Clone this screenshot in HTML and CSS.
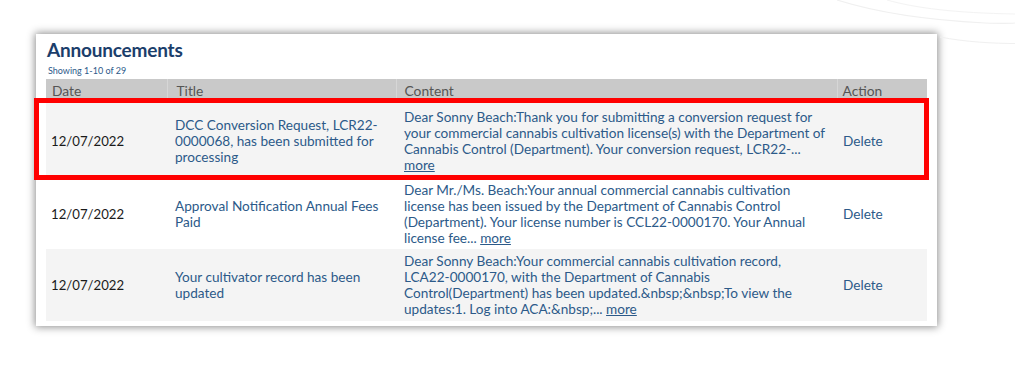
FILE: index.html
```html
<!DOCTYPE html>
<html lang="en">
<head>
    <meta charset="UTF-8">
    <title>Announcements</title>
    <link rel="stylesheet" href="styles.css">
</head>
<body>
    <!-- faint background swoosh, top right -->
    <svg class="swoosh" width="200" height="50" viewBox="0 0 200 50">
        <path d="M22 0 C60 12 110 20 170 23 C185 23.5 195 23.5 200 23" fill="none" stroke="#f0f0f0" stroke-width="1.2"/>
        <path d="M72 0 C100 8 140 13 200 14" fill="none" stroke="#f3f3f3" stroke-width="1"/>
        <path d="M125 37 C150 42 180 43.5 200 43.5" fill="none" stroke="#f0f0f0" stroke-width="1"/>
    </svg>
    <div class="panel">
        <h1>Announcements</h1>
        <p class="count">Showing 1-10 of 29</p>
        <div class="table-wrap">
            <table class="grid">
                <thead>
                    <tr>
                        <th class="col-date">Date</th>
                        <th class="col-title">Title</th>
                        <th class="col-content">Content</th>
                        <th class="col-action">Action</th>
                    </tr>
                </thead>
                <tbody>
                    <tr class="alt first">
                        <td class="date">12/07/2022</td>
                        <td class="title">DCC Conversion Request, LCR22-0000068, has been submitted for processing</td>
                        <td class="content">Dear Sonny Beach:Thank you for submitting a conversion request for your commercial cannabis cultivation license(s) with the Department of Cannabis Control (Department). Your conversion request, LCR22-... <a href="#">more</a></td>
                        <td class="action"><a href="#">Delete</a></td>
                    </tr>
                    <tr class="second">
                        <td class="date">12/07/2022</td>
                        <td class="title">Approval Notification Annual Fees Paid</td>
                        <td class="content">Dear Mr./Ms. Beach:Your annual commercial cannabis cultivation license has been issued by the Department of Cannabis Control (Department). Your license number is CCL22-0000170. Your Annual license fee... <a href="#">more</a></td>
                        <td class="action"><a href="#">Delete</a></td>
                    </tr>
                    <tr class="alt">
                        <td class="date">12/07/2022</td>
                        <td class="title">Your cultivator record has been updated</td>
                        <td class="content">Dear Sonny Beach:Your commercial cannabis cultivation record, LCA22-0000170, with the Department of Cannabis Control(Department) has been updated.&amp;nbsp;&amp;nbsp;To view the updates:1. Log into ACA:&amp;nbsp;... <a href="#">more</a></td>
                        <td class="action"><a href="#">Delete</a></td>
                    </tr>
                </tbody>
            </table>
            <!-- highlight box drawn over the first row -->
            <div class="highlight"></div>
        </div>
    </div>
</body>
</html>
```

FILE: styles.css
```css
/* Reset */
* {
    margin: 0;
    padding: 0;
    box-sizing: border-box;
}
body {
    width: 1015px;
    height: 381px;
    background: #fff;
    font-family: Lato, "Open Sans", Arial, sans-serif;
    overflow: hidden;
    position: relative;
}
.swoosh {
    position: absolute;
    top: 0;
    right: 0;
}
/* White card with the drop shadow */
.panel {
    margin: 34px 0 0 36px;
    width: 901px;
    height: 292px;
    background: #fff;
    box-shadow: 0 0 8px 1px rgba(0, 0, 0, 0.45);
    padding: 6px 10px 0 10px;
}
h1 {
    font-size: 19px;
    font-weight: 700;
    color: #1b3e6b;
    line-height: 20px;
    margin-left: 1px;
    letter-spacing: -0.2px;
}
.count {
    font-size: 9px;
    color: #2d5a8a;
    line-height: 12px;
    margin: 5px 0 2px 2px;
}
.table-wrap {
    position: relative;
}
/* Results table */
.grid {
    width: 881px;
    border-collapse: collapse;
    font-size: 13.6px;
    line-height: 16px;
    table-layout: fixed;
}
.grid th {
    background: #c9c9c9;
    color: #555;
    font-weight: 400;
    font-size: 13.8px;
    text-align: left;
    height: 20px;
    padding: 3px 6px 0 8px;
    border-left: 1px solid #d6d6d6;
}
.grid th.col-date {
    padding-left: 6px;
    border-left: none;
}
.grid th.col-title {
    padding-left: 9px;
}
.grid th.col-action {
    padding-left: 5px;
}
.col-date { width: 121px; }
.col-title { width: 229px; }
.col-content { width: 441px; }
.grid td {
    padding: 3px 6px 3px 8px;
    vertical-align: middle;
    color: #2c5a89;
}
.grid tbody tr {
    height: 72px;
}
.grid tr.first {
    height: 80px;
}
.grid tr.first td {
    padding-top: 6px;
    padding-bottom: 2px;
}
.grid tr.second {
    height: 70px;
}
.grid tr.alt td {
    background: #f4f4f4;
}
.grid td.date {
    color: #1a1a1a;
    padding-left: 5px;
    font-size: 13.2px;
}
.grid td.title {
    padding-right: 12px;
}
.grid td.content {
    padding-right: 8px;
}
.grid td.action {
    padding-left: 6px;
}
.grid a {
    color: #2c5a89;
}
.grid td.action a {
    text-decoration: none;
}
/* Red annotation box */
.highlight {
    position: absolute;
    left: -12px;
    top: 19px;
    width: 895px;
    height: 82px;
    border: 5px solid #f00;
    pointer-events: none;
}
```
